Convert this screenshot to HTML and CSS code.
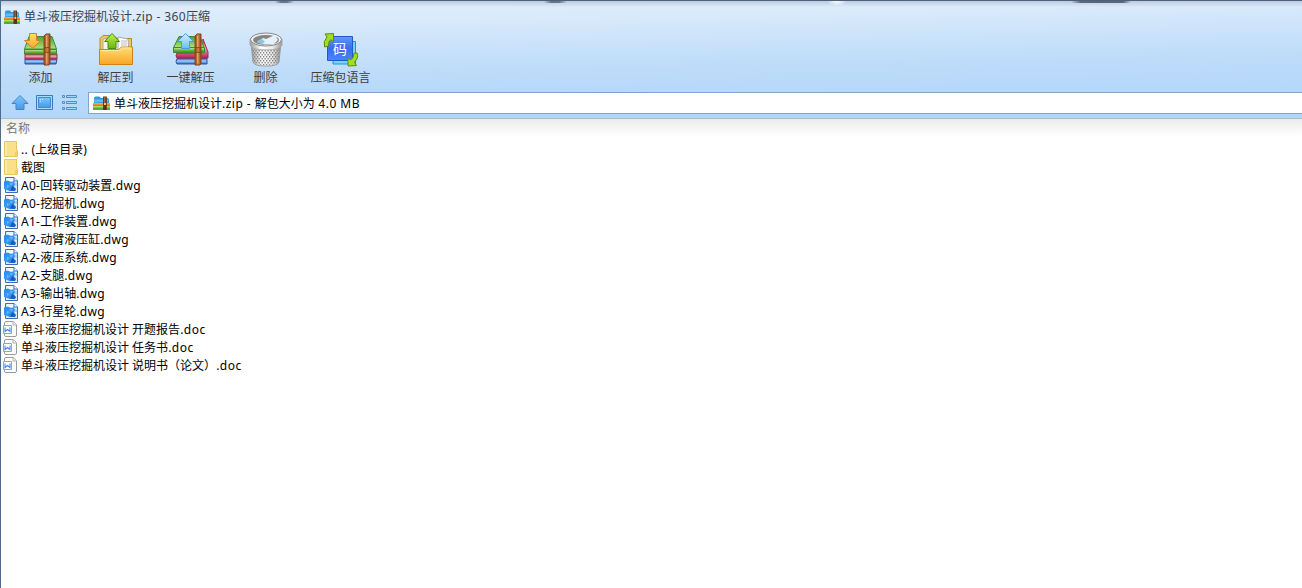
FILE: index.html
```
<!DOCTYPE html>
<html lang="zh-CN">
<head>
<meta charset="utf-8">
<title>单斗液压挖掘机设计.zip - 360压缩</title>
<link rel="stylesheet" href="styles.css">
</head>
<body>
<svg class="defs" width="0" height="0">
  <defs>
    <linearGradient id="green" x1="0" y1="0" x2="0" y2="1"><stop offset="0" stop-color="#4aa636"/><stop offset=".6" stop-color="#83c95a"/><stop offset="1" stop-color="#b4e088"/></linearGradient>
    <linearGradient id="greenside" x1="0" y1="0" x2="0" y2="1"><stop offset="0" stop-color="#d4f0a0"/><stop offset=".5" stop-color="#6bbb45"/><stop offset="1" stop-color="#3a8d28"/></linearGradient>
    <linearGradient id="red" x1="0" y1="0" x2="0" y2="1"><stop offset="0" stop-color="#c0305a"/><stop offset=".45" stop-color="#f3a3b4"/><stop offset="1" stop-color="#b5234e"/></linearGradient>
    <linearGradient id="blue" x1="0" y1="0" x2="0" y2="1"><stop offset="0" stop-color="#2f5fb8"/><stop offset=".45" stop-color="#a3ceff"/><stop offset="1" stop-color="#2c62c2"/></linearGradient>
    <linearGradient id="belt" x1="0" y1="0" x2="1" y2="0"><stop offset="0" stop-color="#8b4519"/><stop offset=".5" stop-color="#d88a4a"/><stop offset="1" stop-color="#8b4519"/></linearGradient>
    <linearGradient id="gold" x1="0" y1="0" x2="0" y2="1"><stop offset="0" stop-color="#ffdf72"/><stop offset="1" stop-color="#f9a524"/></linearGradient>
    <linearGradient id="lime" x1="0" y1="0" x2="0" y2="1"><stop offset="0" stop-color="#c4f04a"/><stop offset="1" stop-color="#6bb510"/></linearGradient>
    <linearGradient id="sky" x1="0" y1="0" x2="0" y2="1"><stop offset="0" stop-color="#d6f2ff"/><stop offset="1" stop-color="#6bbcf8"/></linearGradient>
    <linearGradient id="nav" x1="0" y1="0" x2="0" y2="1"><stop offset="0" stop-color="#7cc8fa"/><stop offset="1" stop-color="#4b97e8"/></linearGradient>
    <linearGradient id="tile" x1="0" y1="0" x2="0" y2="1"><stop offset="0" stop-color="#5d9bfa"/><stop offset=".5" stop-color="#3b6cec"/><stop offset="1" stop-color="#4a86fa"/></linearGradient>
    <linearGradient id="metal" x1="0" y1="0" x2="1" y2="0"><stop offset="0" stop-color="#9a9a9a"/><stop offset=".35" stop-color="#fff"/><stop offset=".7" stop-color="#ececec"/><stop offset="1" stop-color="#959595"/></linearGradient>
    <linearGradient id="ink" x1="0" y1="0" x2="1" y2="1"><stop offset="0" stop-color="#1e86ee"/><stop offset=".5" stop-color="#3f9cf6"/><stop offset="1" stop-color="#0e4cb4"/></linearGradient>
    <pattern id="mesh" width="3" height="4" patternUnits="userSpaceOnUse"><path d="M0 0h1.300v1.500H0zM1.500 2h1.300v1.500H1.500z" fill="#808080"/></pattern>

    <symbol id="zip" viewBox="0 0 16 14" preserveAspectRatio="none">
      <path d="M1 2Q1 .5 2.500 .5H6L7.500 2H13.500q1.500 0 1.500 1.500V7H1z" fill="#2b9de4"/><path d="M1.500 3.500h13v2l-13 1z" fill="#62bdf4"/>
      <path d="M0 7h16v2H0z" fill="#f9a63a"/><path d="M0 8.500h16v1.500H0z" fill="#e87424"/>
      <path d="M0 10h16v4H0z" fill="#54ac38"/><path d="M0 10h16v1.500H0z" fill="#b3dc58"/>
      <path d="M9.500 .5h3.500V14H9.500z" fill="#63301c"/><path d="M10.600 1h1v6h-1z" fill="#b57850"/><path d="M10.400 7h1.800v2h-1.800z" fill="#f0c394"/>
    </symbol>
    <symbol id="folder" viewBox="0 0 14 16">
      <path d="M.5.5h12v9.300h1v5.700H.5z" fill="#fbe08a" stroke="#e9c65e"/><path d="M1 1h2v14H1z" fill="#fdeaa6"/><path d="M11 10.500h2v5h-2z" fill="#f1cf66"/>
    </symbol>
    <symbol id="dwg" viewBox="0 0 14 16">
      <path d="M1.500 .5H10L13.500 4v11.500h-12z" fill="#d9ebff" stroke="#3c6cba"/><path d="M3 2h6M3 3.500h6" stroke="#fff"/><path d="M10 .5V4h3.500" fill="#fff" stroke="#3c6cba"/>
      <path d="M0 4.500l4-1 3 1.500 3-1 1 3-1 2.500 2 2.500-1 2H6l-3-1-3-1z" fill="url(#ink)"/>
      <path d="M6 6l3 .5-2 2zM3 8l2 1-2 2z" fill="#74bcff"/><path d="M8 9l2 2-1 2H7z" fill="#1553bd"/><path d="M11 6h2v3h-2z" fill="#a6cffb"/>
    </symbol>
    <symbol id="doc" viewBox="0 0 14 16">
      <path d="M3 .5h7.300l3.200 3.200V14q0 1.500-1.500 1.500H3q-1.500 0-1.500-1.500V2Q1.500 .5 3 .5z" fill="#fff" stroke="#9b9b9b"/><path d="M10 .5v3.500h3.500" fill="#f6f6f6" stroke="#b1b1b1"/>
      <path d="M.5 4.500h8v8h-8z" fill="#fff" stroke="#7fa8e6"/><path d="M2 6.500v4l2.500-2 2.500 2v-4" fill="none" stroke="#4a86e4" stroke-width="1.100"/>
    </symbol>
    <symbol id="books" viewBox="0 0 36 36">
      <path d="M2 27h32l-1 5H2z" fill="url(#blue)" stroke="#2c559f"/><path d="M2 22h32v5H2z" fill="url(#red)" stroke="#a32a4f"/>
      <path d="M6 4.500h23L33.500 17H1.500z" fill="url(#green)" stroke="#3d8e32"/><path d="M1.500 17.500h32v4.500h-32z" fill="url(#greenside)" stroke="#3c8a2e"/>
    </symbol>
    <symbol id="strap" viewBox="0 0 8 34" preserveAspectRatio="none">
      <path d="M1 3l2-2h4v30l-1 2H1z" fill="url(#belt)" stroke="#8a4518"/><path d="M3.600 3v28" stroke="#f1b274" stroke-width=".8"/><path d="M2 15h4v5H2z" fill="#d0783a" stroke="#81400f" stroke-width=".8"/>
    </symbol>
  </defs>
</svg>
<div class="window">
  <header class="chrome">
    <div class="titlebar"><svg class="zip"><use href="#zip"/></svg><h1>单斗液压挖掘机设计<span class="latin-title">.zip - 360</span>压缩</h1></div>
    <nav class="toolbar">
      <button class="tool">
        <svg viewBox="0 0 36 36"><use href="#books" width="36" height="36"/><use href="#strap" x="20" y="1" width="8" height="33"/><path d="M6.500 1.500h7v7h4L10 16.500 1.500 8.500h5z" fill="url(#gold)" stroke="#c98428"/></svg>
        <span>添加</span></button>
      <button class="tool">
        <svg viewBox="0 0 36 36"><path d="M2 6.500l3-3h8l2 3h18.500V20H2z" fill="#f4c64c" stroke="#b98b27"/><path d="M5 7l13-2 5 14H5z" fill="#f4f4f4" stroke="#aaa"/><path d="M20 5l10 2 1 13H20z" fill="#fff" stroke="#aaa"/><path d="M23 9h6M23 11h6M23 13h6" stroke="#bbb"/><path d="M1.500 17.500h19l3-2.500h11v17.500h-33z" fill="url(#gold)" stroke="#cf8412"/><path d="M2.500 18.500h18.500l3-2.500h9" fill="none" stroke="#ffeaa2"/><path d="M14 1.500l7.500 8h-3.500V16.500h-8V9.500H6.500z" fill="url(#lime)" stroke="#468c0c"/></svg>
        <span>解压到</span></button>
      <button class="tool">
        <svg viewBox="0 0 38 36"><path d="M5 26.500h30v5.500H5q-2-2 0-5.500z" fill="url(#blue)" stroke="#2c559f"/><path d="M31 7l5 13v6H5q-2-2 0-5h25z" fill="url(#red)" stroke="#a32a4f"/><path d="M7 4.500h21l4 11H1.500z" fill="url(#green)" stroke="#3d8e32"/><path d="M1.500 15.500h31v5h-31z" fill="url(#greenside)" stroke="#3c8a2e"/><use href="#strap" x="22" y="1" width="8" height="33"/><path d="M13.500 1.500l8 8h-4v7h-8v-7h-4z" fill="url(#sky)" stroke="#4b99de"/></svg>
        <span>一键解压</span></button>
      <button class="tool">
        <svg viewBox="0 0 36 36"><path d="M3 10h30l-2 20q-1 4-13 4T5 30z" fill="url(#metal)" stroke="#999"/><path d="M4 16h28l-1.500 14q-3 3-12.500 3T5.500 30z" fill="url(#mesh)"/><path d="M2 7v6q2 5 16 5t16-5V7z" fill="url(#metal)" stroke="#aaa"/><ellipse cx="18" cy="7.500" rx="15.500" ry="6.500" fill="#f1f1f1" stroke="#888"/><ellipse cx="18" cy="8" rx="13" ry="5" fill="#848484"/><path d="M9 10l6-4 3 1 9-4 3 5-4 4-9 .5z" fill="#e4f1f8"/><path d="M9 9l5-2 3 3-4 2z" fill="#8ac6e7"/></svg>
        <span>删除</span></button>
      <button class="tool">
        <svg viewBox="0 0 36 36"><path d="M10 9.500h22.500v22.500H10z" fill="#79d2ff" stroke="#1097e8"/><path d="M4.500 4.500h25v24h-25z" fill="url(#tile)" stroke="#2456cc"/><text class="code" x="17" y="21.500" text-anchor="middle">码</text><path d="M1.500 15Q0 9 4 5L2 2l8.500-.5V10L8 7.500Q5 9.500 5.500 14z" fill="#a4dc20" stroke="#568f10"/><path d="M34 21q2 5-2.500 9l2 3.500-8.500 .5v-8.500l2.500 2.500q3.500-2 3.500-7z" fill="#a4dc20" stroke="#568f10"/></svg>
        <span>压缩包语言</span></button>
    </nav>
    <div class="addressbar">
      <svg class="nav" viewBox="0 0 18 18"><path d="M9 1.500l8 8h-4v6H5v-6H1z" fill="url(#nav)" stroke="#4585c4"/></svg>
      <svg class="nav" viewBox="0 0 18 18"><path d="M.5 1.500h16v14H.5z" fill="#a7dcff" stroke="#3a79be"/><path d="M2.500 3.500h12v10h-12z" fill="url(#nav)" stroke="#4589cc"/><path d="M4 5.500h1M6 5.500h1M4 7.500h1" stroke="#c4eaff"/></svg>
      <svg class="nav" viewBox="0 0 18 18"><g fill="#9edcff" stroke="#4a8ed0"><path d="M1.500 1.500h2v2h-2zM1.500 7.500h2v2h-2zM1.500 13.500h2v2h-2z"/><path d="M5.500 1.500h10v2h-10zM5.500 7.500h10v2h-10zM5.500 13.500h10v2h-10z"/></g></svg>
      <div class="address"><svg class="zip"><use href="#zip"/></svg><span>单斗液压挖掘机设计<span class="latin-address">.zip - </span>解包大小为<span class="latin-address"> 4.0 MB</span></span></div>
    </div>
  </header>
  <main class="files">
    <div class="column">名称</div>
    <ul>
      <li><svg><use href="#folder"/></svg><span><b>.. (</b>上级目录)</span></li>
      <li><svg><use href="#folder"/></svg><span>截图</span></li>
      <li><svg><use href="#dwg"/></svg><span><b>A0-</b>回转驱动装置<b>.dwg</b></span></li>
      <li><svg><use href="#dwg"/></svg><span><b>A0-</b>挖掘机<b>.dwg</b></span></li>
      <li><svg><use href="#dwg"/></svg><span><b>A1-</b>工作装置<b>.dwg</b></span></li>
      <li><svg><use href="#dwg"/></svg><span><b>A2-</b>动臂液压缸<b>.dwg</b></span></li>
      <li><svg><use href="#dwg"/></svg><span><b>A2-</b>液压系统<b>.dwg</b></span></li>
      <li><svg><use href="#dwg"/></svg><span><b>A2-</b>支腿<b>.dwg</b></span></li>
      <li><svg><use href="#dwg"/></svg><span><b>A3-</b>输出轴<b>.dwg</b></span></li>
      <li><svg><use href="#dwg"/></svg><span><b>A3-</b>行星轮<b>.dwg</b></span></li>
      <li class="doc"><svg><use href="#doc"/></svg><span>单斗液压挖掘机设计 开题报告<b>.doc</b></span></li>
      <li class="doc"><svg><use href="#doc"/></svg><span>单斗液压挖掘机设计 任务书<b>.doc</b></span></li>
      <li class="doc"><svg><use href="#doc"/></svg><span>单斗液压挖掘机设计 说明书（论文）<b>.doc</b></span></li>
    </ul>
  </main>
</div>
</body>
</html>
```
FILE: styles.css
```
* { box-sizing: border-box; }
body { margin: 0; height: 588px; overflow: hidden; background: #fff; color: #000; font: 12px/18px "Noto Sans", "Noto Sans CJK SC", sans-serif; white-space: nowrap; }
.defs { display: block; position: absolute; }
svg { display: block; flex: none; }
.window { height: 588px; display: flex; flex-direction: column; border-left: 1px solid #4e6b8c; }
.chrome {
  height: 119px; flex: none; border-top: 1px solid #4b617e; border-bottom: 1px solid #b4bac1;
  background:
    radial-gradient(ellipse 10px 5px at 836px 0, #fff, transparent),
    linear-gradient(90deg, transparent 1070px, #59677b 1080px, #59677b 1122px, transparent 1130px) 0 0 / 100% 2px no-repeat,
    linear-gradient(90deg, transparent 274px, #687587 280px, #687587 286px, transparent 293px, transparent 543px, #687587 550px, #687587 558px, transparent 566px) 0 0 / 100% 2px no-repeat,
    linear-gradient(#bccadd, rgba(205, 218, 235, 0)) 0 0 / 100% 6px no-repeat,
    linear-gradient(179deg, #e1effc 0, #d9eafb 18%, #bedcf9 54%, #b3d7fb 82%, #b3d7fb 100%);
}
.titlebar { height: 31px; display: flex; align-items: center; gap: 4px; padding-left: 3px; }
.zip { width: 16px; height: 14px; }
h1 { margin: 1px 0 0; font: inherit; color: #38434f; }
.toolbar { display: flex; height: 58px; padding-left: 2px; }
.tool { width: 75px; padding: 0; border: 0; background: none; font: inherit; color: #3e3e3e; display: flex; flex-direction: column; align-items: center; }
.tool svg { width: 36px; height: 36px; margin-bottom: 1px; }
.tool:nth-child(3) svg { width: 38px; }
.code { font: 14px "Noto Sans CJK SC", sans-serif; fill: #fff; }
.addressbar { display: flex; align-items: flex-start; padding: 2px 0 0 10px; gap: 7px; }
.nav { width: 18px; height: 18px; margin-top: 2px; }
.address { flex: 1; height: 22px; margin-left: 2px; padding-left: 4px; display: flex; align-items: center; gap: 4px; background: #fff; border: 1px solid #7fa6cd; border-right: 0; }
.address .zip { width: 17px; height: 14px; }
.address > span { padding-top: 2px; }
.files { flex: 1; background: linear-gradient(#ececec, #fff 18px); }
.column { height: 21px; line-height: 20px; padding-left: 5px; color: #777; }
ul { margin: 0; padding: 0 0 0 3px; list-style: none; }
li { height: 18px; display: flex; align-items: center; gap: 3px; }
li > span { padding-top: 2px; }
li svg { width: 14px; height: 16px; }
li b { font-weight: 400; letter-spacing: .28px; }
.doc { margin-left: -1px; gap: 4px; }
.doc b { letter-spacing: .5px; }
.latin-title { letter-spacing: .4px; }
.latin-address { letter-spacing: .47px; }
```
